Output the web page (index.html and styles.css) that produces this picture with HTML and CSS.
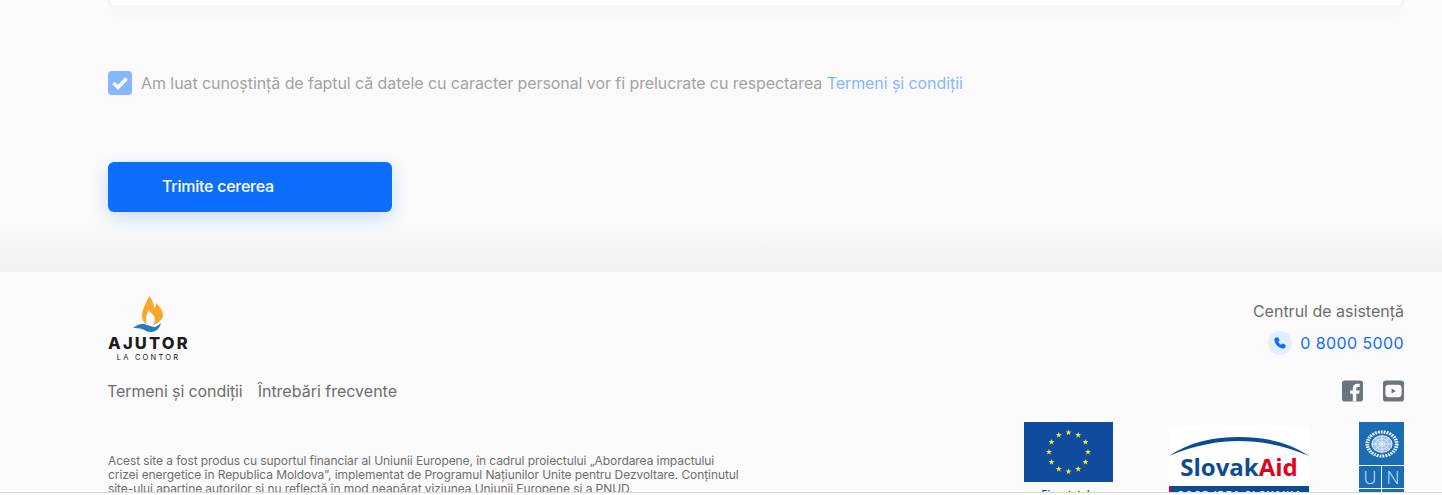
FILE: index.html
```html
<!DOCTYPE html>
<html lang="ro">
<head>
  <meta charset="UTF-8" />
  <meta name="viewport" content="width=device-width, initial-scale=1.0"/>
  <title>Ajutor la contor</title>
  <link rel="stylesheet" href="styles.css">
</head>
<body>

<main class="form-end">
  <div class="card-bottom"></div>

  <label class="consent">
    <span class="checkbox">
      <svg width="16" height="14" viewBox="0 0 16 14"><path d="M1.500 7l4.500 4.500 8.500-9" fill="none" stroke="#fff" stroke-width="3.400"/></svg>
    </span>
    <span>Am luat cunoștință de faptul că datele cu caracter personal vor fi prelucrate cu respectarea <a href="#">Termeni și condiții</a></span>
  </label>

  <button class="submit" type="button">Trimite cererea</button>
</main>

<footer class="footer">
  <div class="footer-top">
    <div class="logo">
      <svg class="logo-mark" width="36" height="38" viewBox="0 0 36 38">
        <path d="M19 1C17 7 12 13 12 21c0 4 2 7 5 8-2-4-1-9 2-14 2 4 6 5 6 9 0 2-1 4-2 6 6-2 10-6 10-10 0-5-4-9-7-12 0 3-1 4-2 5 0-4-2-9-5-12z" fill="#f9a72b"/>
        <path d="M3 33c5-4 10-5 14-3 2 1 5 1 7 2 2 0 5-2 7-4-1 5-5 9-10 9-4 0-6-2-9-3-3-1-6-1-9-1z" fill="#2479c0"/>
      </svg>
      <div class="logo-name">AJUTOR</div>
      <div class="logo-sub">LA CONTOR</div>
    </div>
    <div class="help">
      <div class="help-title">Centrul de asistență</div>
      <a class="help-phone" href="#">
        <span class="phone-icon">
          <svg width="14" height="14" viewBox="0 0 24 24"><path d="M6.600 2.200l3 .6 1.600 5-2.300 2c1 2.400 3 4.300 5.200 5.300l2-2.300 5 1.600.6 3c.1 1.600-2 4.300-4.400 4.100C9.500 20.800 3.200 14.500 2.400 6.600 2.200 4.200 5 2.100 6.600 2.200z" fill="#0d6efd"/></svg>
        </span>
        0 8000 5000
      </a>
    </div>
  </div>

  <div class="footer-links">
    <nav class="links">
      <a href="#">Termeni și condiții</a>
      <a href="#">Întrebări frecvente</a>
    </nav>
    <div class="social">
      <svg width="21" height="22" viewBox="0 0 22 22"><rect width="22" height="22" rx="3" fill="#6c757d"/><path d="M15 22v-8h3l.5-3.500H15V8.500c0-1 .5-1.800 1.800-1.800h1.800V3.500c-.8-.1-1.700-.2-2.600-.2-3 0-4.700 1.800-4.700 4.800v2.400H8.500V14h2.800v8z" fill="#fbfbfb"/></svg>
      <svg width="21" height="22" viewBox="0 0 22 22"><rect width="22" height="22" rx="3" fill="#6c757d"/><rect x="2.500" y="4.500" width="17" height="13" rx="3.500" fill="#fbfbfb"/><path d="M9 8.500l4.500 2.500L9 13.500z" fill="#6c757d"/></svg>
    </div>
  </div>

  <div class="footer-bottom">
    <p class="disclaimer">Acest site a fost produs cu suportul financiar al Uniunii Europene, în cadrul proiectului „Abordarea impactului crizei energetice în Republica Moldova”, implementat de Programul Națiunilor Unite pentru Dezvoltare. Conținutul site-ului aparține autorilor și nu reflectă în mod neapărat viziunea Uniunii Europene și a PNUD.</p>
    <div class="partners">
      <div class="eu">
        <svg width="89" height="60" viewBox="0 0 89 60">
          <defs><path id="star" d="M0-3l.8 2.100H3L1.200.4 1.900 2.700 0 1.300-1.900 2.700-1.200.4-3-.9H-.8z" fill="#f7e33c"/></defs>
          <rect width="89" height="60" fill="#0f4c9e"/>
          <use href="#star" x="44.500" y="10.500"/><use href="#star" x="54.200" y="13"/><use href="#star" x="61.500" y="20"/><use href="#star" x="64" y="30"/><use href="#star" x="61.500" y="40"/><use href="#star" x="54.200" y="47"/><use href="#star" x="44.500" y="49.500"/><use href="#star" x="34.800" y="47"/><use href="#star" x="27.500" y="40"/><use href="#star" x="25" y="30"/><use href="#star" x="27.500" y="20"/><use href="#star" x="34.800" y="13"/>
        </svg>
        <div class="eu-caption">Finanțat de</div>
      </div>
      <div class="slovak">
        <svg class="slovak-arc" width="140" height="22" viewBox="0 0 140 22"><path d="M0 20C20 6 45 1 70 1s50 5 70 19C115 9 90 5 70 5S25 9 0 20z" fill="#0b4c94"/></svg>
        <div class="slovak-name">Slovak<span>Aid</span></div>
        <div class="slovak-strip">GOOD IDEA SLOVAKIA</div>
      </div>
      <div class="undp">
        <div class="undp-globe">
          <svg width="34" height="28" viewBox="0 0 37 37" preserveAspectRatio="none" fill="none" stroke="#fff"><circle cx="18.500" cy="18.500" r="16" stroke-width="4" stroke-dasharray="2 1.200"/><circle cx="18.500" cy="18.500" r="11" fill="#9dc3e4" stroke-width="1"/><circle cx="18.500" cy="18.500" r="7" stroke-width=".7"/><circle cx="18.500" cy="18.500" r="3" stroke-width=".7"/><path d="M18.500 7.500v22M7.500 18.500h22M10.500 10.500l16 16M26.500 10.500l-16 16" stroke-width=".7"/></svg>
        </div>
        <div class="undp-cells"><span>U</span><span>N</span></div>
        <div class="undp-cells"><span>D</span><span>P</span></div>
      </div>
    </div>
  </div>
</footer>

<div class="page-edge"></div>

</body>
</html>
```
FILE: styles.css
```css
html, body {
  height: 100%;
  margin: 0;
  padding: 0;
}
body {
  font-family: Inter, 'Noto Sans', sans-serif;
  background: #fbfbfb;
  overflow: hidden;
  position: relative;
}
a {
  text-decoration: none;
}
.form-end {
  height: 272px;
  box-sizing: border-box;
  padding: 0 40px 0 110px;
  background: linear-gradient(to bottom, #fafafa 0, #fafafa 220px, #f1f1f1 272px);
}
.card-bottom {
  height: 5px;
  background: #fff;
  border-radius: 0 0 10px 10px;
  box-shadow: 0 0 0 2px #f5f5f5, 0 6px 18px rgba(0, 0, 0, 0.06);
}
.consent {
  display: flex;
  align-items: center;
  gap: 9px;
  margin: 66px 0 0 -2px;
  font-size: 16px;
  line-height: 24px;
  letter-spacing: -0.075px;
  color: #a3a3a3;
}
.consent a {
  color: #86b7fe;
}
.checkbox {
  display: flex;
  align-items: center;
  justify-content: center;
  width: 24px;
  height: 24px;
  background: #86b7fe;
  border-radius: 4px;
}
.submit {
  display: block;
  width: 284px;
  height: 50px;
  margin: 67px 0 0 -2px;
  padding: 0 0 2px 54px;
  border: 0;
  border-radius: 6px;
  background: #0d6efd;
  color: #fff;
  font-family: inherit;
  font-size: 16px;
  font-weight: 500;
  letter-spacing: -0.25px;
  text-align: left;
  box-shadow: 0 6px 18px rgba(13, 110, 253, 0.2);
}
.footer {
  padding: 23px 38px 0 108px;
  color: #6e6e6e;
}
.footer-top {
  display: flex;
  justify-content: space-between;
}
.logo {
  width: 81px;
  text-align: center;
}
.logo-mark {
  display: block;
  margin-left: 22px;
}
.logo-name {
  margin-top: 2px;
  font-size: 16.500px;
  line-height: 16px;
  font-weight: 800;
  letter-spacing: 2.200px;
  color: #1d1d1b;
  white-space: nowrap;
}
.logo-sub {
  margin-top: 2px;
  font-size: 7.500px;
  line-height: 9px;
  letter-spacing: 2.200px;
  color: #1d1d1b;
  white-space: nowrap;
}
.help {
  display: flex;
  flex-direction: column;
  align-items: flex-end;
  font-size: 16px;
}
.help-title {
  margin-top: 4px;
  line-height: 24px;
}
.help-phone {
  display: flex;
  align-items: center;
  gap: 8px;
  margin-top: 8px;
  color: #0d6efd;
  letter-spacing: 0.400px;
  line-height: 24px;
}
.phone-icon {
  display: flex;
  align-items: center;
  justify-content: center;
  width: 24px;
  height: 24px;
  border-radius: 50%;
  background: #e3effe;
}
.footer-links {
  display: flex;
  justify-content: space-between;
  align-items: center;
  margin-top: 17px;
}
.links {
  display: flex;
  gap: 15px;
  margin-left: -1px;
  font-size: 16px;
  line-height: 24px;
}
.links a {
  color: #6e6e6e;
}
.links a:first-child {
  letter-spacing: -0.1px;
}
.social {
  display: flex;
  gap: 20px;
}
.social svg {
  display: block;
}
.footer-bottom {
  display: flex;
  justify-content: space-between;
  margin-top: 19px;
}
.disclaimer {
  width: 634px;
  margin: 32px 0 0;
  font-size: 12px;
  line-height: 14px;
  letter-spacing: -0.08px;
  color: #6e6e6e;
}
.partners {
  display: flex;
  align-items: flex-start;
}
.eu {
  width: 89px;
  text-align: center;
}
.eu svg {
  display: block;
}
.eu-caption {
  margin-top: 6px;
  font-size: 10px;
  font-weight: 600;
  color: #0f4c9e;
}
.slovak {
  width: 140px;
  height: 70px;
  margin: 3px 50px 0 56px;
  background: #fff;
  text-align: center;
}
.slovak-arc {
  display: block;
  margin-top: 11px;
}
.slovak-name {
  margin-top: -5px;
  font-family: 'Open Sans', sans-serif;
  font-size: 24px;
  line-height: 27px;
  font-weight: 700;
  color: #0b4c94;
}
.slovak-name span {
  color: #e2001a;
}
.slovak-strip {
  margin-top: 6px;
  padding-top: 3px;
  background: #0b4c94;
  border-left: 2px solid #e2001a;
  color: #fff;
  font-size: 9px;
  line-height: 12px;
  font-weight: 700;
  letter-spacing: 1.500px;
  white-space: nowrap;
}
.undp {
  width: 45px;
}
.undp-globe {
  display: flex;
  justify-content: center;
  align-items: center;
  height: 43px;
  background: #1a6cb5;
}
.undp-cells {
  display: flex;
  gap: 1px;
  margin-top: 1px;
}
.undp-cells span {
  flex: 1;
  height: 22px;
  background: #1a6cb5;
  color: #dbe9f5;
  font-family: 'Open Sans', sans-serif;
  font-size: 18px;
  font-weight: 300;
  line-height: 22px;
  text-align: center;
}
.page-edge {
  position: absolute;
  left: 0;
  right: 0;
  top: 492px;
  bottom: 0;
  background: #fff;
  border-top: 1px solid #d9d9d9;
}
```
